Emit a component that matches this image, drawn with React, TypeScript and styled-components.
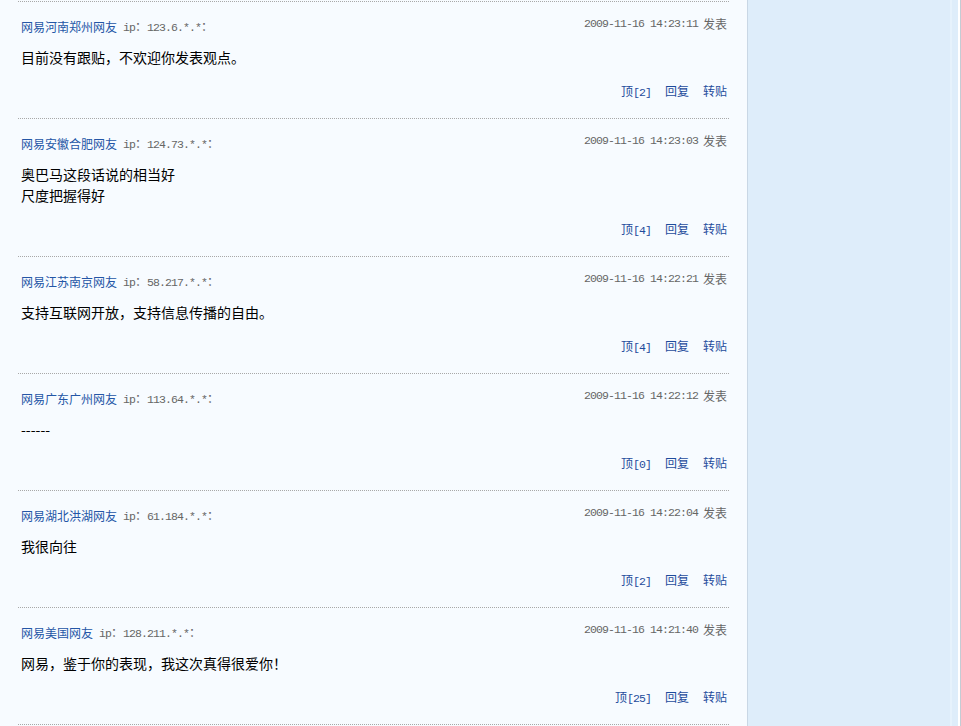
import styled, { createGlobalStyle } from "styled-components";

const GlobalStyle = createGlobalStyle`
  html, body {
    margin: 0;
    padding: 0;
    background: #ffffff;
  }
  body {
    font-family: "Noto Sans CJK SC", "Liberation Sans", sans-serif;
    font-size: 12px;
  }
`;

type Post = {
  user: string;
  ip: string;
  time: string;
  lines: string[];
  up: number;
};

const posts: Post[] = [
  { user: "网易河南郑州网友", ip: "123.6.*.*", time: "2009-11-16 14:23:11", lines: ["目前没有跟贴，不欢迎你发表观点。"], up: 2 },
  { user: "网易安徽合肥网友", ip: "124.73.*.*", time: "2009-11-16 14:23:03", lines: ["奥巴马这段话说的相当好", "尺度把握得好"], up: 4 },
  { user: "网易江苏南京网友", ip: "58.217.*.*", time: "2009-11-16 14:22:21", lines: ["支持互联网开放，支持信息传播的自由。"], up: 4 },
  { user: "网易广东广州网友", ip: "113.64.*.*", time: "2009-11-16 14:22:12", lines: ["------"], up: 0 },
  { user: "网易湖北洪湖网友", ip: "61.184.*.*", time: "2009-11-16 14:22:04", lines: ["我很向往"], up: 2 },
  { user: "网易美国网友", ip: "128.211.*.*", time: "2009-11-16 14:21:40", lines: ["网易，鉴于你的表现，我这次真得很爱你！"], up: 25 },
];

const Page = styled.div`
  display: flex;
  width: 961px;
  height: 726px;
  overflow: hidden;
`;

const Main = styled.div`
  width: 748px;
  flex-shrink: 0;
  background: #f7fbff;
  border-right: 1px solid #c9d7e5;
  padding: 1px 18px 0 18px;
  box-sizing: border-box;
`;

const Side = styled.div`
  flex: 1;
  background: #deedfa;
  display: flex;
  justify-content: flex-end;
`;

const SideEdge = styled.div`
  width: 8px;
  border-left: 2px solid #e6f2fc;
  border-right: 1px solid #c4ccd4;
  background: #deedfa;
  box-shadow: inset -2px 0 0 #ffffff;
`;

const List = styled.div`
  display: flex;
  flex-direction: column;
  border-bottom: 1px dotted #a8a8a8;
`;

const Item = styled.div`
  border-top: 1px dotted #a8a8a8;
  padding: 14px 2px 19px 3px;
`;

const Head = styled.div`
  display: flex;
  justify-content: space-between;
  align-items: flex-start;
  height: 16px;
  line-height: 16px;
`;

const Who = styled.div`
  margin-top: 2px;
  display: flex;
  align-items: center;
  gap: 6px;
`;

const User = styled.a`
  color: #2456a6;
  text-decoration: none;
  font-size: 12px;
`;

const Mono = styled.span`
  font-family: "Liberation Mono", "DejaVu Sans Mono", monospace;
  font-size: 11.5px;
  letter-spacing: -0.9px;
`;

const Gray = styled.span`
  color: #666666;
  font-size: 12px;
`;

const Stamp = styled(Gray)`
  display: flex;
  gap: 5px;
`;

const Body = styled.div`
  margin-top: 15px;
  font-size: 14px;
  line-height: 21px;
  color: #000000;
`;

const Actions = styled.div`
  margin-top: 15px;
  height: 16px;
  line-height: 16px;
  display: flex;
  justify-content: flex-end;
  gap: 14px;
`;

const Action = styled.a`
  color: #1f4c9c;
  text-decoration: none;
  font-size: 12px;
`;

export default function App() {
  return (
    <>
      <GlobalStyle />
      <Page>
        <Main>
          <List>
            {posts.map((p) => (
              <Item key={p.time}>
                <Head>
                  <Who>
                    <User>{p.user}</User>
                    <Gray>
                      <Mono>ip</Mono>：<Mono>{p.ip}</Mono>：
                    </Gray>
                  </Who>
                  <Stamp>
                    <Mono>{p.time}</Mono>
                    <span>发表</span>
                  </Stamp>
                </Head>
                <Body>
                  {p.lines.map((l) => (
                    <div key={l}>{l}</div>
                  ))}
                </Body>
                <Actions>
                  <Action>
                    顶<Mono>[{p.up}]</Mono>
                  </Action>
                  <Action>回复</Action>
                  <Action>转贴</Action>
                </Actions>
              </Item>
            ))}
          </List>
        </Main>
        <Side>
          <SideEdge />
        </Side>
      </Page>
    </>
  );
}
